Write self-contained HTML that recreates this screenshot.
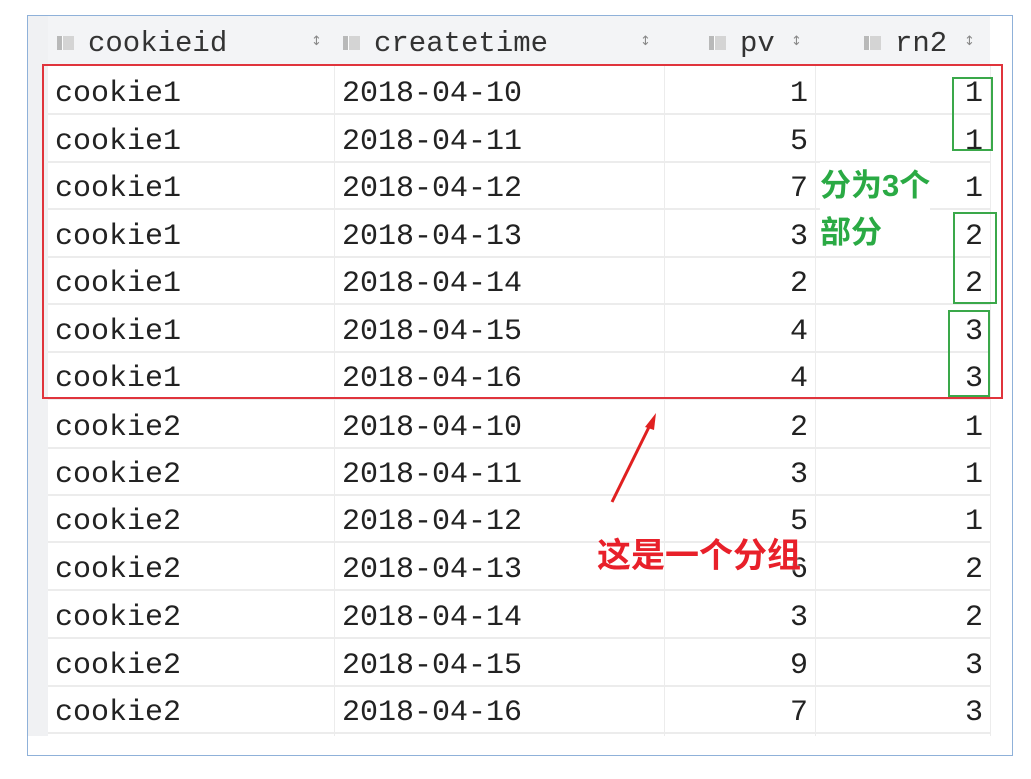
<!DOCTYPE html>
<html><head><meta charset="utf-8"><style>
body{margin:0;width:1031px;height:779px;background:#fff;position:relative;overflow:hidden;font-family:"Liberation Mono",monospace;}
.frame{position:absolute;left:27px;top:15px;width:986px;height:741px;border:1px solid #8fb1d9;background:#fff;box-sizing:border-box;}
.gut{position:absolute;left:28px;top:16px;width:20px;height:720px;background:#f0f1f3;}
.hdr{position:absolute;left:48px;top:16px;width:942px;height:50px;background:#f3f4f6;}
.h{position:absolute;top:27px;font-size:29px;color:#333;}
.ic{position:absolute;top:36px;width:17px;height:14px;background:linear-gradient(90deg,#aaa 0 5px,#fff 5px 6px,#ccc 6px);opacity:.8}
.ar{position:absolute;top:34px;font:13px "DejaVu Sans",sans-serif;color:#888;}
.row{position:absolute;left:48px;width:942px;height:47px;border-bottom:2px solid #ececec;box-sizing:border-box;}
.c{position:absolute;font-size:30px;color:#222;top:9px;}
.v{position:absolute;top:0;width:1px;height:720px;background:#ececec;}
.box{position:absolute;box-sizing:border-box;}
</style></head><body>
<div class="frame"></div>
<div class="gut"></div>
<div class="hdr"></div>
<div class="v" style="left:334px;top:66px;height:670px"></div>
<div class="v" style="left:664px;top:66px;height:670px"></div>
<div class="v" style="left:815px;top:66px;height:670px"></div>
<div class="v" style="left:990px;top:66px;height:670px"></div>
<div class="ic" style="left:57px"></div><div class="h" style="left:88px">cookieid</div><div class="ar" style="left:311px">↕</div>
<div class="ic" style="left:343px"></div><div class="h" style="left:374px">createtime</div><div class="ar" style="left:640px">↕</div>
<div class="ic" style="left:709px"></div><div class="h" style="left:740px">pv</div><div class="ar" style="left:791px">↕</div>
<div class="ic" style="left:864px"></div><div class="h" style="left:895px">rn2</div><div class="ar" style="left:964px">↕</div>

<div class="row" style="top:68px"><span class="c" style="left:7px">cookie1</span><span class="c" style="left:294px">2018-04-10</span><span class="c" style="left:742px">1</span><span class="c" style="left:917px">1</span></div>
<div class="row" style="top:116px"><span class="c" style="left:7px">cookie1</span><span class="c" style="left:294px">2018-04-11</span><span class="c" style="left:742px">5</span><span class="c" style="left:917px">1</span></div>
<div class="row" style="top:163px"><span class="c" style="left:7px">cookie1</span><span class="c" style="left:294px">2018-04-12</span><span class="c" style="left:742px">7</span><span class="c" style="left:917px">1</span></div>
<div class="row" style="top:211px"><span class="c" style="left:7px">cookie1</span><span class="c" style="left:294px">2018-04-13</span><span class="c" style="left:742px">3</span><span class="c" style="left:917px">2</span></div>
<div class="row" style="top:258px"><span class="c" style="left:7px">cookie1</span><span class="c" style="left:294px">2018-04-14</span><span class="c" style="left:742px">2</span><span class="c" style="left:917px">2</span></div>
<div class="row" style="top:306px"><span class="c" style="left:7px">cookie1</span><span class="c" style="left:294px">2018-04-15</span><span class="c" style="left:742px">4</span><span class="c" style="left:917px">3</span></div>
<div class="row" style="top:353px"><span class="c" style="left:7px">cookie1</span><span class="c" style="left:294px">2018-04-16</span><span class="c" style="left:742px">4</span><span class="c" style="left:917px">3</span></div>
<div class="row" style="top:402px"><span class="c" style="left:7px">cookie2</span><span class="c" style="left:294px">2018-04-10</span><span class="c" style="left:742px">2</span><span class="c" style="left:917px">1</span></div>
<div class="row" style="top:449px"><span class="c" style="left:7px">cookie2</span><span class="c" style="left:294px">2018-04-11</span><span class="c" style="left:742px">3</span><span class="c" style="left:917px">1</span></div>
<div class="row" style="top:496px"><span class="c" style="left:7px">cookie2</span><span class="c" style="left:294px">2018-04-12</span><span class="c" style="left:742px">5</span><span class="c" style="left:917px">1</span></div>
<div class="row" style="top:544px"><span class="c" style="left:7px">cookie2</span><span class="c" style="left:294px">2018-04-13</span><span class="c" style="left:742px">6</span><span class="c" style="left:917px">2</span></div>
<div class="row" style="top:592px"><span class="c" style="left:7px">cookie2</span><span class="c" style="left:294px">2018-04-14</span><span class="c" style="left:742px">3</span><span class="c" style="left:917px">2</span></div>
<div class="row" style="top:640px"><span class="c" style="left:7px">cookie2</span><span class="c" style="left:294px">2018-04-15</span><span class="c" style="left:742px">9</span><span class="c" style="left:917px">3</span></div>
<div class="row" style="top:687px"><span class="c" style="left:7px">cookie2</span><span class="c" style="left:294px">2018-04-16</span><span class="c" style="left:742px">7</span><span class="c" style="left:917px">3</span></div>

<div class="box" style="left:42px;top:64px;width:961px;height:335px;border:2px solid #e0343c"></div>
<div class="box" style="left:952px;top:77px;width:41px;height:74px;border:2px solid #3aa84a"></div>
<div class="box" style="left:953px;top:212px;width:44px;height:92px;border:2px solid #3aa84a"></div>
<div class="box" style="left:948px;top:310px;width:42px;height:87px;border:2px solid #3aa84a"></div>
<div style="position:absolute;left:820px;top:162px;font:bold 31px/47px 'Liberation Sans','Noto Sans CJK SC',sans-serif;color:#2aaa44;background:#fff">分为3个<br>部分</div>
<div style="position:absolute;left:597px;top:528px;font:bold 34px 'Liberation Sans','Noto Sans CJK SC',sans-serif;color:#e8202a;text-shadow:0 0 3px #fff">这是一个分组</div>
<svg style="position:absolute;left:0;top:0" width="1031" height="779"><line x1="612" y1="502" x2="650" y2="425" stroke="#e02020" stroke-width="3"/><polygon points="656,413 645,427 654,430" fill="#e02020"/></svg>
</body></html>
